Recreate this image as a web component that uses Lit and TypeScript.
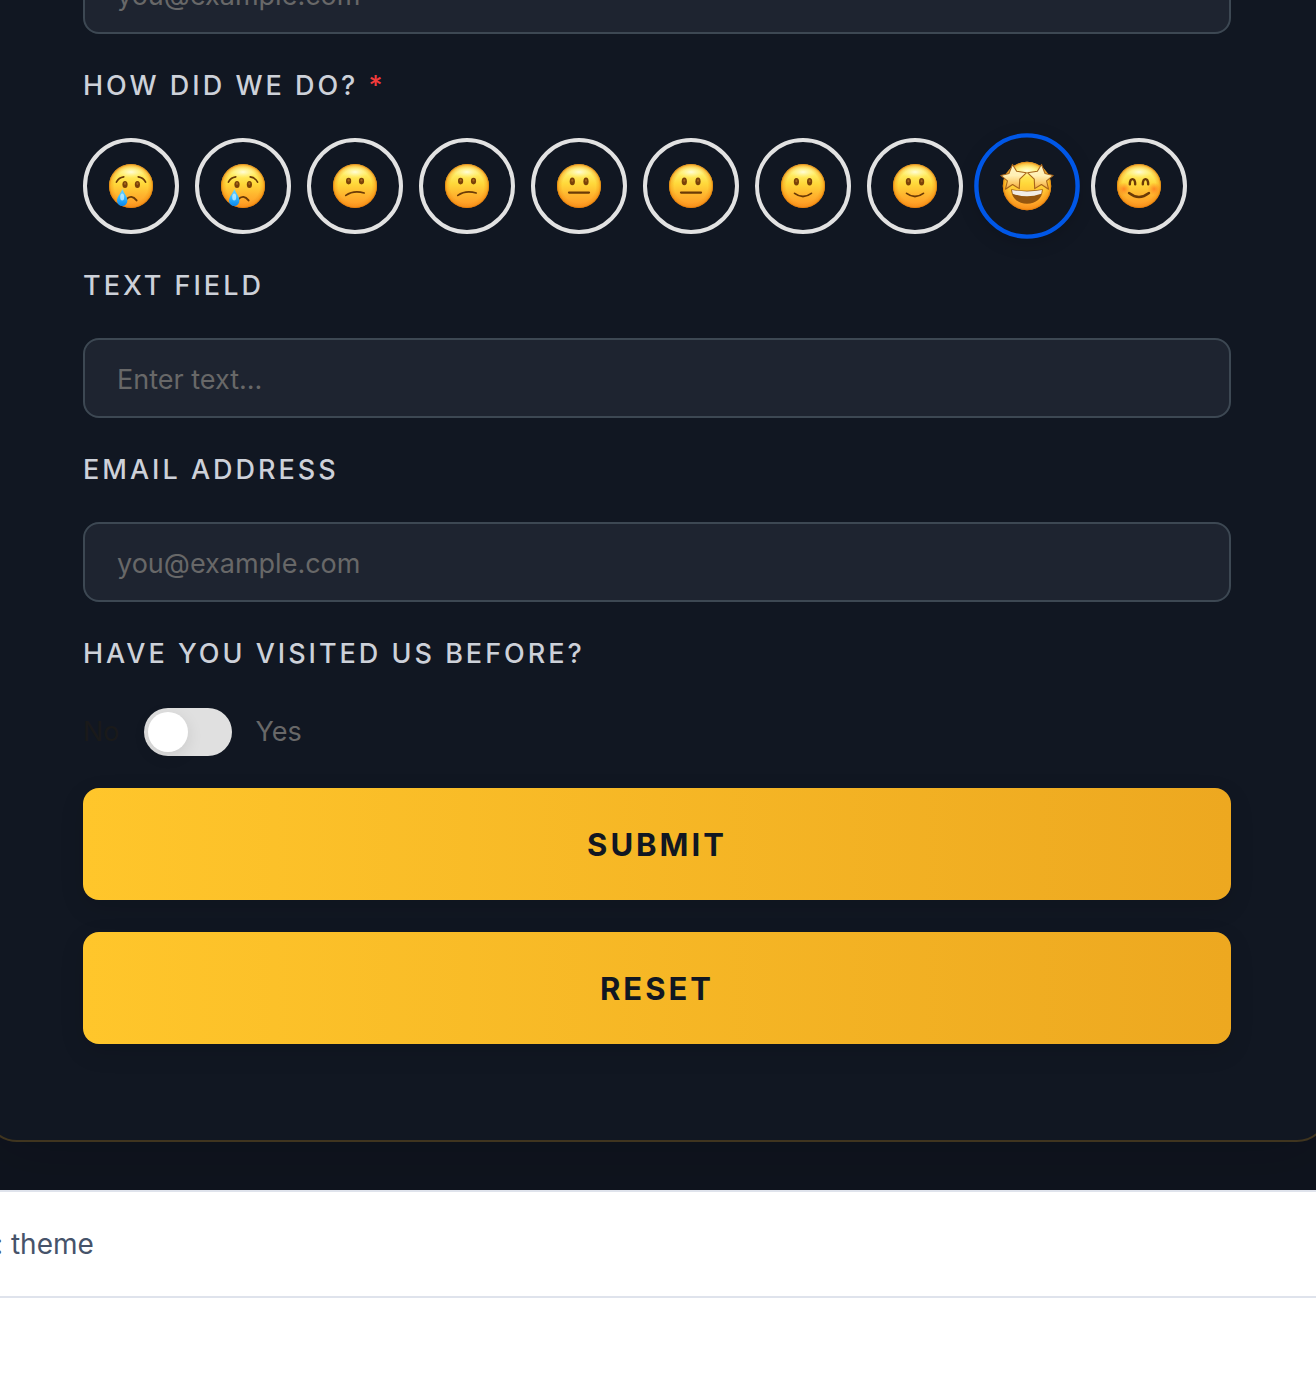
import { LitElement, html, css, svg } from "lit";
import { customElement, property, state } from "lit/decorators.js";

type Mood = "cry" | "confused" | "neutral" | "smile" | "star" | "happy";

const BROWN = "#6b3a06";

const eyes = (x1: number, x2: number, y: number, ry: number) => svg`
  <g fill="#7a4208">
    <ellipse cx=${x1} cy=${y} rx="2.6" ry=${ry} />
    <ellipse cx=${x2} cy=${y} rx="2.6" ry=${ry} />
  </g>
  <g fill="#a8681c">
    <ellipse cx=${x1} cy=${y - 0.9} rx="1" ry="1.3" />
    <ellipse cx=${x2} cy=${y - 0.9} rx="1" ry="1.3" />
  </g>`;

const STAR = "M8.8 2.4 L12.6 8.6 L21.4 10 L15.4 15.8 L15 24.4 L8.9 20.6 L2.4 24.9 L4.2 17.4 L-1.8 12.4 L5.6 10.6 Z";

const features = {
  cry: svg`
    ${eyes(16, 28.4, 20.5, 3.6)}
    <g fill="none" stroke=${BROWN} stroke-width="1.6" stroke-linecap="round">
      <path d="M7.4 18.2 Q9.6 13.6 14.8 12.9" />
      <path d="M29.2 12.9 Q34.4 13.6 36.6 18.2" />
      <path d="M17.2 35.4 Q22.4 29.8 27.6 36.4" stroke-width="1.9" />
    </g>
    <path d="M13.4 25 C15 29 18.4 32.8 18.4 36.8 A5.2 5.2 0 0 1 8 36.8 C8 32.8 12 29 13.4 25 Z" fill="url(#tear)" />
    <ellipse cx="13.2" cy="33" rx="2" ry="3.6" fill="#d4f3ff" opacity="0.7" />`,
  confused: svg`
    ${eyes(15.6, 28.5, 17.1, 3.3)}
    <path d="M12.8 31.4 Q20.6 25.8 31.2 29" fill="none" stroke=${BROWN} stroke-width="1.7" stroke-linecap="round" />`,
  neutral: svg`
    ${eyes(15.3, 29, 17.4, 3.8)}
    <path d="M12 28.6 H32" stroke=${BROWN} stroke-width="2.2" stroke-linecap="round" />`,
  smile: svg`
    ${eyes(15.4, 28.6, 17.8, 3.7)}
    <path d="M13.6 29.4 Q22 35.6 30.4 29.4" fill="none" stroke=${BROWN} stroke-width="1.8" stroke-linecap="round" />`,
  star: svg`
    <path d="M7.6 25 Q22 27.6 36.4 25 C36 33.4 30 38.2 22 38.2 C14 38.2 8 33.4 7.6 25 Z" fill="#95560f" />
    <path d="M8.4 25.6 Q22 28.2 35.6 25.6 L35 29 Q22 33.8 9 29 Z" fill="#f1ece6" />
    <g fill="url(#star)" stroke="#a8651a" stroke-width="1" stroke-linejoin="round">
      <path d=${STAR} />
      <path d=${STAR} transform="matrix(-1 0 0 1 44 0)" />
    </g>`,
  happy: svg`
    <circle cx="6.8" cy="25" r="6.6" fill="url(#blush)" />
    <circle cx="37.2" cy="25" r="6.6" fill="url(#blush)" />
    <g fill="none" stroke=${BROWN} stroke-width="2.4" stroke-linecap="round">
      <path d="M12.8 20.4 C13 13.4 18 13.4 18.2 20.4" />
      <path d="M25.8 20.4 C26 13.4 31 13.4 31.2 20.4" />
      <path d="M12 29 Q22 36.8 32 29" />
    </g>`,
};

@customElement("mood-face")
class MoodFace extends LitElement {
  @property() mood: Mood = "neutral";

  static styles = css`
    :host {
      display: block;
      width: 44px;
      height: 44px;
    }
    .face {
      display: block;
      width: 100%;
      height: 100%;
      overflow: visible;
    }
  `;

  render() {
    return html`
      <svg class="face" viewBox="0 0 44 44" aria-hidden="true">
        <defs>
          <linearGradient id="skin" x1="0" y1="0" x2="0" y2="1">
            <stop offset="0" stop-color="#ffe96a" />
            <stop offset="0.2" stop-color="#fff06a" />
            <stop offset="0.45" stop-color="#ffd83a" />
            <stop offset="0.7" stop-color="#ffb52e" />
            <stop offset="1" stop-color="#ff9624" />
          </linearGradient>
          <radialGradient id="rim" cx="0.5" cy="0.5" r="0.5">
            <stop offset="0.76" stop-color="#f08a10" stop-opacity="0" />
            <stop offset="0.92" stop-color="#f08a10" stop-opacity="0.4" />
            <stop offset="1" stop-color="#dc7200" stop-opacity="0.9" />
          </radialGradient>
          <radialGradient id="shine" cx="0.5" cy="0.5" r="0.5">
            <stop offset="0" stop-color="#fffde0" stop-opacity="0.95" />
            <stop offset="1" stop-color="#fff59a" stop-opacity="0" />
          </radialGradient>
          <radialGradient id="blush">
            <stop offset="0" stop-color="#ff6a1c" stop-opacity="0.7" />
            <stop offset="1" stop-color="#ff7a1c" stop-opacity="0" />
          </radialGradient>
          <linearGradient id="tear" x1="0" y1="0" x2="0" y2="1">
            <stop offset="0" stop-color="#6fd6ff" />
            <stop offset="0.5" stop-color="#35b8ff" />
            <stop offset="1" stop-color="#0a86ea" />
          </linearGradient>
          <linearGradient id="star" x1="0" y1="0" x2="0" y2="1">
            <stop offset="0" stop-color="#fff6c8" />
            <stop offset="0.45" stop-color="#ffefb4" />
            <stop offset="0.75" stop-color="#fccb6a" />
            <stop offset="1" stop-color="#eea23c" />
          </linearGradient>
        </defs>
        <circle cx="22" cy="22" r="22" fill="url(#skin)" />
        <circle cx="22" cy="22" r="22" fill="url(#rim)" />
        <ellipse cx="22" cy="8" rx="14" ry="6" fill="url(#shine)" />
        ${features[this.mood]}
      </svg>
    `;
  }
}

const RATINGS: { mood: Mood; name: string }[] = [
  { mood: "cry", name: "1 of 10" },
  { mood: "cry", name: "2 of 10" },
  { mood: "confused", name: "3 of 10" },
  { mood: "confused", name: "4 of 10" },
  { mood: "neutral", name: "5 of 10" },
  { mood: "neutral", name: "6 of 10" },
  { mood: "smile", name: "7 of 10" },
  { mood: "smile", name: "8 of 10" },
  { mood: "star", name: "9 of 10" },
  { mood: "happy", name: "10 of 10" },
];

@customElement("app-root")
class AppRoot extends LitElement {
  @state() rating = 8;

  static styles = css`
    :host {
      display: block;
      min-height: 100vh;
      overflow: hidden;
      background: #ffffff;
      font-family: Inter, "Liberation Sans", sans-serif;
      font-size: 27px;
      line-height: 40px;
    }
    * {
      box-sizing: border-box;
    }
    .stage {
      display: flow-root;
      overflow: hidden;
      background: #0f141e;
      padding-bottom: 48px;
    }
    .card {
      margin: -144px -13px 0 -15px;
      padding: 96px;
      border: 2px solid #40351f;
      border-radius: 32px;
      background: #111722;
      box-shadow: 0 16px 64px rgba(0, 0, 0, 0.12);
    }
    .form {
      display: flex;
      flex-direction: column;
      gap: 32px;
    }
    .field {
      display: flex;
      flex-direction: column;
      gap: 32px;
    }
    .label {
      color: #cdd1d9;
      font-weight: 500;
      letter-spacing: 3px;
      text-transform: uppercase;
    }
    .required {
      color: #f23b3b;
    }
    .input {
      width: 100%;
      height: 80px;
      padding: 2px 32px 0;
      border: 2px solid #3d4853;
      border-radius: 16px;
      background: #1e2430;
      color: #e5e7eb;
      font: inherit;
    }
    .input::placeholder {
      color: #686868;
      opacity: 1;
    }
    .ratings {
      display: flex;
      flex-wrap: wrap;
      gap: 16px;
    }
    .rating {
      display: grid;
      place-items: center;
      border-radius: 50%;
      cursor: pointer;
    }
    .rating > * {
      grid-area: 1 / 1;
    }
    .radio {
      appearance: none;
      width: 96px;
      height: 96px;
      margin: 0;
      border: 4px solid #e2e2e2;
      border-radius: 50%;
    }
    .selected {
      transform: scale(1.1);
      box-shadow: 0 4px 16px rgba(0, 0, 0, 0.15);
    }
    .selected .radio {
      border-color: #0057e7;
    }
    .toggle {
      display: flex;
      align-items: center;
      gap: 24px;
      padding-top: 2px;
      line-height: 48px;
    }
    .off {
      color: #1a1a1a;
    }
    .on {
      color: #686868;
    }
    .switch {
      appearance: none;
      display: flex;
      width: 88px;
      height: 48px;
      margin: 0;
      padding: 4px;
      border-radius: 24px;
      background: #e0e0e0;
      cursor: pointer;
    }
    .switch::before {
      content: "";
      width: 40px;
      height: 40px;
      border-radius: 50%;
      background: #ffffff;
      box-shadow: 0 4px 16px rgba(0, 0, 0, 0.1);
    }
    .switch:checked {
      justify-content: flex-end;
      background: #0057e7;
    }
    .button {
      height: 112px;
      padding: 2px 32px 0;
      border: 0;
      border-radius: 16px;
      background: linear-gradient(90deg, #ffc62b, #eda820);
      box-shadow: 0 8px 24px rgba(0, 0, 0, 0.12);
      color: #111722;
      font: inherit;
      font-size: 31px;
      font-weight: 700;
      letter-spacing: 3px;
      text-transform: uppercase;
      cursor: pointer;
    }
    .caption {
      display: flex;
      align-items: center;
      height: 108px;
      margin-left: -5px;
      border: solid #dfe3ec;
      border-width: 2px 0;
      color: #46536a;
      font-size: 28px;
    }
  `;

  render() {
    return html`
      <main class="stage">
        <section class="card">
          <form class="form" @submit=${(e: Event) => e.preventDefault()}>
            <input class="input" type="email" aria-label="Email" placeholder="you@example.com" />
            <div class="field" role="radiogroup" aria-labelledby="rate">
              <div class="label" id="rate">How did we do? <span class="required">*</span></div>
              <div class="ratings">
                ${RATINGS.map(
                  (r, i) => html`
                    <label class="rating ${i === this.rating ? "selected" : ""}">
                      <input
                        class="radio"
                        type="radio"
                        name="rating"
                        aria-label=${r.name}
                        .checked=${i === this.rating}
                        @change=${() => (this.rating = i)}
                      />
                      <mood-face mood=${r.mood}></mood-face>
                    </label>
                  `,
                )}
              </div>
            </div>
            <div class="field">
              <label class="label" for="text">Text field</label>
              <input class="input" id="text" type="text" placeholder="Enter text..." />
            </div>
            <div class="field">
              <label class="label" for="email">Email address</label>
              <input class="input" id="email" type="email" placeholder="you@example.com" />
            </div>
            <div class="field">
              <label class="label" for="visited">Have you visited us before?</label>
              <div class="toggle">
                <span class="off">No</span>
                <input class="switch" id="visited" type="checkbox" role="switch" />
                <span class="on">Yes</span>
              </div>
            </div>
            <button class="button" type="submit">Submit</button>
            <button class="button" type="reset">Reset</button>
          </form>
        </section>
      </main>
      <footer class="caption">: theme</footer>
    `;
  }
}
